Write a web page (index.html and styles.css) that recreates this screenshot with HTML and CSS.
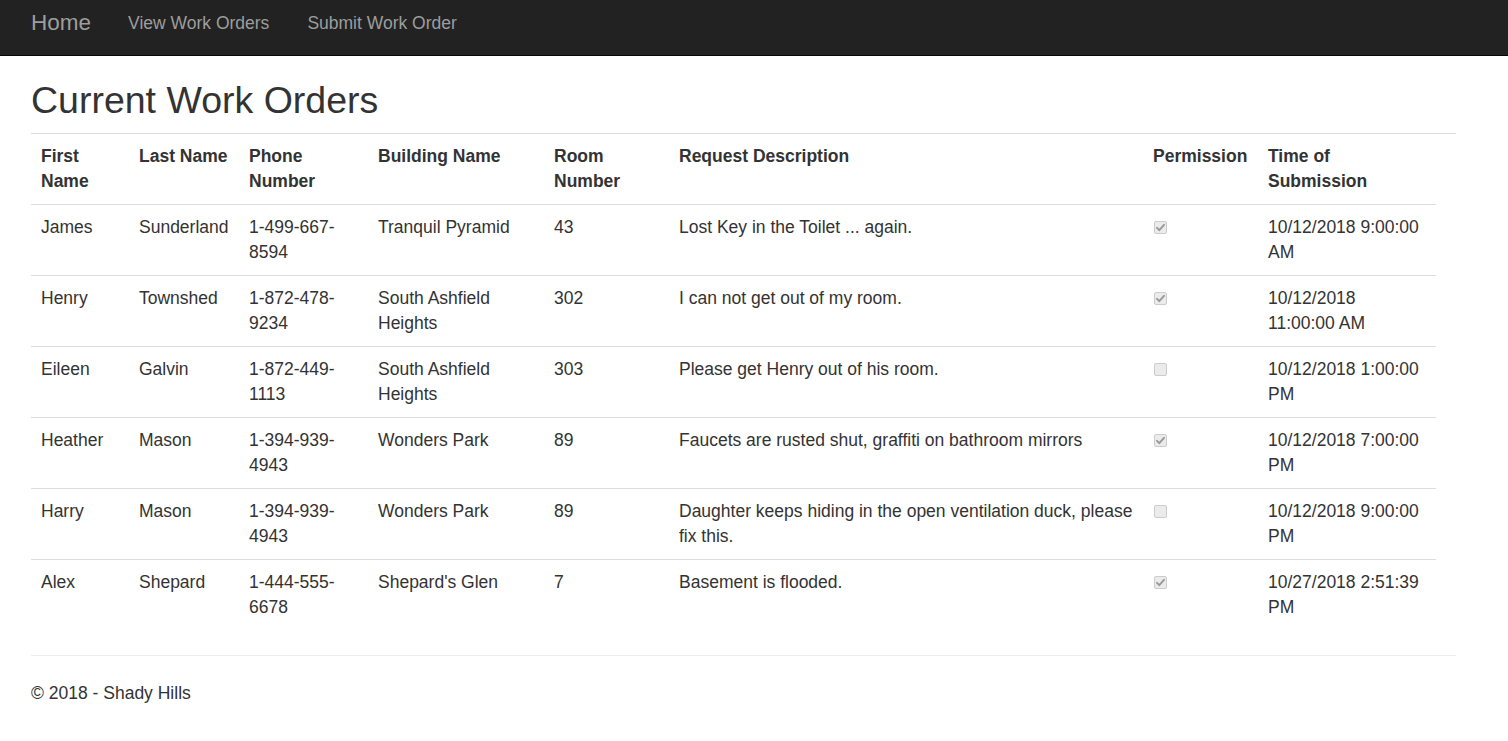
FILE: index.html
```html
<!DOCTYPE html>
<html lang="en">
<head>
<meta charset="utf-8">
<title>Current Work Orders</title>
<link rel="stylesheet" href="styles.css">
</head>
<body>
<nav class="navbar">
  <a class="brand" href="#">Home</a>
  <a class="nav-link" href="#">View Work Orders</a>
  <a class="nav-link" href="#">Submit Work Order</a>
</nav>
<main class="content">
  <h2 class="title">Current Work Orders</h2>
  <hr class="rule">
  <table class="orders">
    <colgroup>
      <col class="c1"><col class="c2"><col class="c3"><col class="c4"><col class="c5"><col class="c6"><col class="c7"><col class="c8">
    </colgroup>
    <thead>
      <tr>
        <th>First Name</th>
        <th>Last Name</th>
        <th>Phone Number</th>
        <th>Building Name</th>
        <th>Room Number</th>
        <th>Request Description</th>
        <th class="nowrap">Permission</th>
        <th>Time of Submission</th>
      </tr>
    </thead>
    <tbody>
      <tr>
        <td>James</td><td>Sunderland</td><td>1-499-667-8594</td><td>Tranquil Pyramid</td><td>43</td>
        <td>Lost Key in the Toilet ... again.</td>
        <td><span class="cb checked"><svg viewBox="0 0 13 13" width="13" height="13"><path d="M3 6.8 L5.3 9.2 L10 3.8" fill="none" stroke="#999" stroke-width="1.9" stroke-linecap="round" stroke-linejoin="round"/></svg></span></td>
        <td>10/12/2018 9:00:00 AM</td>
      </tr>
      <tr>
        <td>Henry</td><td>Townshed</td><td>1-872-478-9234</td><td>South Ashfield Heights</td><td>302</td>
        <td>I can not get out of my room.</td>
        <td><span class="cb checked"><svg viewBox="0 0 13 13" width="13" height="13"><path d="M3 6.8 L5.3 9.2 L10 3.8" fill="none" stroke="#999" stroke-width="1.9" stroke-linecap="round" stroke-linejoin="round"/></svg></span></td>
        <td>10/12/2018 11:00:00 AM</td>
      </tr>
      <tr>
        <td>Eileen</td><td>Galvin</td><td>1-872-449-1113</td><td>South Ashfield Heights</td><td>303</td>
        <td>Please get Henry out of his room.</td>
        <td><span class="cb"></span></td>
        <td>10/12/2018 1:00:00 PM</td>
      </tr>
      <tr>
        <td>Heather</td><td>Mason</td><td>1-394-939-4943</td><td>Wonders Park</td><td>89</td>
        <td>Faucets are rusted shut, graffiti on bathroom mirrors</td>
        <td><span class="cb checked"><svg viewBox="0 0 13 13" width="13" height="13"><path d="M3 6.8 L5.3 9.2 L10 3.8" fill="none" stroke="#999" stroke-width="1.9" stroke-linecap="round" stroke-linejoin="round"/></svg></span></td>
        <td>10/12/2018 7:00:00 PM</td>
      </tr>
      <tr>
        <td>Harry</td><td>Mason</td><td>1-394-939-4943</td><td>Wonders Park</td><td>89</td>
        <td>Daughter keeps hiding in the open ventilation duck, please fix this.</td>
        <td><span class="cb"></span></td>
        <td>10/12/2018 9:00:00 PM</td>
      </tr>
      <tr>
        <td>Alex</td><td>Shepard</td><td>1-444-555-6678</td><td>Shepard's Glen</td><td>7</td>
        <td>Basement is flooded.</td>
        <td><span class="cb checked"><svg viewBox="0 0 13 13" width="13" height="13"><path d="M3 6.8 L5.3 9.2 L10 3.8" fill="none" stroke="#999" stroke-width="1.9" stroke-linecap="round" stroke-linejoin="round"/></svg></span></td>
        <td>10/27/2018 2:51:39 PM</td>
      </tr>
    </tbody>
  </table>
  <hr class="footer-rule">
  <footer class="footer">
    <p>&copy; 2018 - Shady Hills</p>
  </footer>
</main>
</body>
</html>
```
FILE: styles.css
```css
* { box-sizing: border-box; }

html, body {
  margin: 0;
  padding: 0;
  background: #fff;
}

body {
  font-family: "Liberation Sans", Arial, Helvetica, sans-serif;
  font-size: 17.5px;
  line-height: 25px;
  color: #333;
}

.navbar {
  height: 56px;
  background: #222;
  border-bottom: 1px solid #080808;
  display: flex;
  align-items: center;
  padding-left: 12px;
}

.navbar a {
  color: #9d9d9d;
  text-decoration: none;
  padding: 0 19px;
}

.navbar .brand {
  font-size: 22.5px;
  line-height: 30px;
  margin-top: -9px;
  padding-right: 18px;
}

.nav-link {
  font-size: 17.5px;
  line-height: 25px;
  margin-top: -8px;
}

.content {
  width: 1456px;
  padding-left: 31px;
}

.title {
  font-size: 37.5px;
  font-weight: 500;
  line-height: 41px;
  margin: 24px 0 12px;
}

.rule {
  margin: 0;
  border: 0;
  border-top: 1px solid #ddd;
  width: 1425px;
}

.orders {
  width: 1405px;
  table-layout: fixed;
  border-collapse: collapse;
  border-spacing: 0;
}

.c1 { width: 98px; }
.c2 { width: 110px; }
.c3 { width: 129px; }
.c4 { width: 176px; }
.c5 { width: 125px; }
.c6 { width: 474px; }
.c7 { width: 115px; }
.c8 { width: 178px; }

.orders th,
.orders td {
  padding: 10px;
  line-height: 25px;
  text-align: left;
  vertical-align: top;
}

.orders th {
  font-weight: bold;
  border-bottom: 1px solid #ddd;
}

.orders td {
  border-top: 1px solid #ddd;
}

.nowrap { white-space: nowrap; }

.cb {
  display: block;
  width: 13px;
  height: 13px;
  margin: 6px 0 0 1px;
  border: 1px solid #cccccc;
  border-radius: 2px;
  background: #ebebeb;
  position: relative;
}

.cb svg {
  display: block;
  position: absolute;
  left: -1px;
  top: -1px;
}

.footer-rule {
  margin: 25px 0 0;
  border: 0;
  border-top: 1px solid #eee;
  width: 1425px;
}

.footer p {
  margin: 25px 0 0;
}
```
